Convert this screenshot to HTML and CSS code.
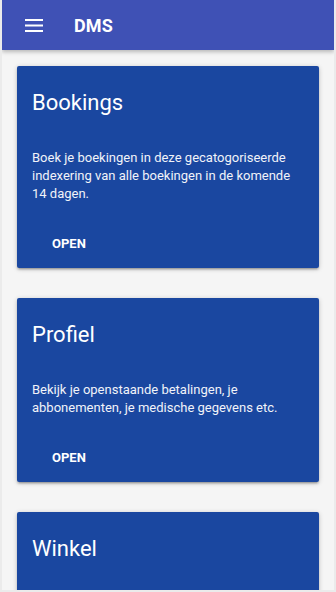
FILE: index.html
```html
<!DOCTYPE html>
<html lang="nl">
<head>
  <meta charset="UTF-8" />
  <meta name="viewport" content="width=device-width, initial-scale=1.0"/>
  <title>DMS</title>
  <link rel="stylesheet" href="styles.css">
</head>
<body>
  <div class="screen">
    <header>
      <button class="menu-btn" aria-label="Menu">
        <svg width="18" height="13" viewBox="0 0 18 13">
          <rect x="0" y="0" width="18" height="2" fill="#fff" />
          <rect x="0" y="5.5" width="18" height="2" fill="#fff" />
          <rect x="0" y="11" width="18" height="2" fill="#fff" />
        </svg>
      </button>
      <h1>DMS</h1>
    </header>

    <div class="container">
      <div class="card">
        <div class="card-content">
          <h2>Bookings</h2>
          <p>Boek je boekingen in deze gecatogoriseerde indexering van alle boekingen in de komende 14 dagen.</p>
        </div>
        <div class="card-action">
          <a href="#">Open</a>
        </div>
      </div>

      <div class="card">
        <div class="card-content">
          <h2>Profiel</h2>
          <p>Bekijk je openstaande betalingen, je abbonementen, je medische gegevens etc.</p>
        </div>
        <div class="card-action">
          <a href="#">Open</a>
        </div>
      </div>

      <!-- rest of this card is below the fold -->
      <div class="card card-last">
        <div class="card-content">
          <h2>Winkel</h2>
        </div>
      </div>
    </div>
  </div>
</body>
</html>
```

FILE: styles.css
```css
body {
  font-family: Roboto, 'Noto Sans', sans-serif;
  margin: 0;
  padding: 0;
  background-color: #e9e9e9;
}

.screen {
  height: 592px;
  box-sizing: border-box;
  overflow: hidden;
  border: 2px solid #ebebeb;
  border-top: none;
  background-color: #f5f5f5;
}

header {
  height: 50px;
  background-color: #3f51b5;
  color: white;
  display: flex;
  align-items: center;
  box-shadow: 0 2px 4px rgba(0, 0, 0, 0.25);
  position: relative;
}

.menu-btn {
  background: none;
  border: none;
  padding: 0;
  margin-left: 23px;
  width: 18px;
  height: 13px;
  display: flex;
}

header h1 {
  margin: 0 0 0 31px;
  font-size: 18px;
  font-weight: 700;
  letter-spacing: 0.1px;
}

.container {
  padding: 16px 15px 0;
}

.card {
  background-color: #1a47a0;
  border-radius: 2px;
  box-shadow: 0 2px 2px rgba(0, 0, 0, 0.14), 0 3px 1px -2px rgba(0, 0, 0, 0.12), 0 1px 5px rgba(0, 0, 0, 0.2);
  margin-bottom: 30px;
  color: white;
}

.card-last {
  height: 120px;
}

.card-content {
  padding: 22px 15px 0;
}

.card h2 {
  margin: 0;
  font-size: 22px;
  font-weight: 400;
  line-height: 30px;
}

.card p {
  margin: 31px 0 0;
  font-size: 13px;
  line-height: 18px;
  color: #f1f3f9;
}

.card-action {
  padding: 30px 15px 16px;
}

.card-action a {
  display: inline-block;
  padding: 0 20px;
  color: white;
  text-decoration: none;
  text-transform: uppercase;
  font-size: 13px;
  font-weight: 700;
  line-height: 16px;
}
```
